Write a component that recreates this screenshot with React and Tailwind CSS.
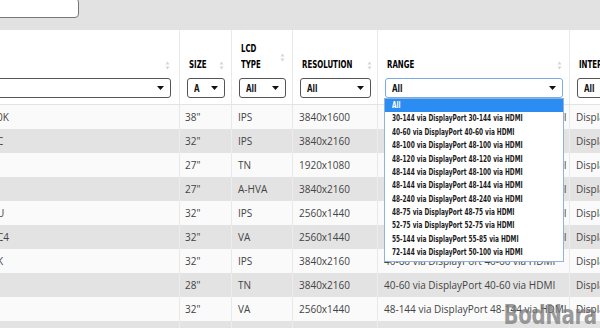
import React from 'react';

const cond = { fontFamily: '"Liberation Sans Narrow", "DejaVu Sans Condensed", "DejaVu Sans", sans-serif' };
const body = { fontFamily: '"Open Sans", "Noto Sans", sans-serif' };

const cols = 'grid grid-cols-[180px_52px_61px_85px_192px_140px]';

const rows = [
    { name: '0K', size: '38"', lcd: 'IPS', res: '3840x1600', range: '30-144 via DisplayPort 30-144 via HDMI' },
    { name: 'C', size: '32"', lcd: 'IPS', res: '3840x2160', range: '40-60 via DisplayPort 40-60 via HDMI' },
    { name: '', size: '27"', lcd: 'TN', res: '1920x1080', range: '48-144 via DisplayPort 48-144 via HDMI' },
    { name: '', size: '27"', lcd: 'A-HVA', res: '3840x2160', range: '48-100 via DisplayPort 48-100 via HDMI' },
    { name: 'U', size: '32"', lcd: 'IPS', res: '2560x1440', range: '48-144 via DisplayPort 48-144 via HDMI' },
    { name: 'C4', size: '32"', lcd: 'VA', res: '2560x1440', range: '48-144 via DisplayPort 48-144 via HDMI' },
    { name: 'K', size: '32"', lcd: 'IPS', res: '3840x2160', range: '40-60 via DisplayPort 40-60 via HDMI' },
    { name: '', size: '28"', lcd: 'TN', res: '3840x2160', range: '40-60 via DisplayPort 40-60 via HDMI' },
    { name: '', size: '32"', lcd: 'VA', res: '2560x1440', range: '48-144 via DisplayPort 48-144 via HDMI' },
    { name: '', size: '27"', lcd: 'IPS', res: '2560x1440', range: '48-144 via DisplayPort 48-144 via HDMI' },
];

const options = [
    'All',
    '30-144 via DisplayPort 30-144 via HDMI',
    '40-60 via DisplayPort 40-60 via HDMI',
    '48-100 via DisplayPort 48-100 via HDMI',
    '48-120 via DisplayPort 48-120 via HDMI',
    '48-144 via DisplayPort 48-100 via HDMI',
    '48-144 via DisplayPort 48-144 via HDMI',
    '48-240 via DisplayPort 48-240 via HDMI',
    '48-75 via DisplayPort 48-75 via HDMI',
    '52-75 via DisplayPort 52-75 via HDMI',
    '55-144 via DisplayPort 55-85 via HDMI',
    '72-144 via DisplayPort 50-100 via HDMI',
];

function SortIcon() {
    return (
        <svg width="5" height="9" viewBox="0 0 5 9" className="shrink-0">
            <path d="M2.5 0.5 L4.5 3.5 L0.5 3.5 Z" fill="#d4d4d4" />
            <path d="M2.5 8.5 L4.5 5.5 L0.5 5.5 Z" fill="#d4d4d4" />
        </svg>
    );
}

function Caret() {
    return (
        <svg width="7" height="4" viewBox="0 0 7 4" className="shrink-0">
            <path d="M0 0 L7 0 L3.5 4 Z" fill="#111" />
        </svg>
    );
}

function Select({ label = 'All', focus = false, className = '' }) {
    return (
        <div
            className={`h-[20px] shrink-0 flex items-center justify-between pl-[6px] pr-[6px] bg-white rounded-[3px] border ${focus ? 'border-[#7aaae6]' : 'border-[#555]'} ${className}`}
        >
            <span className="text-[10px] font-bold text-[#111] origin-left scale-x-[0.8]" style={cond}>{label}</span>
            <Caret />
        </div>
    );
}

function HeadCell({ children, sort = true, select, last = false }) {
    return (
        <div className={`flex flex-col justify-end pb-[6px] pl-[7px] pr-[6px] ${last ? '' : 'border-r border-[#e9e9e9]'}`}>
            <div className="flex items-center justify-between mb-[5px]">
                <div className="ml-[2px] text-[10px] font-bold leading-[16px] text-black uppercase origin-left scale-x-[0.78] whitespace-nowrap" style={cond}>
                    {children}
                </div>
                {sort && <div className="mr-[1px]"><SortIcon /></div>}
            </div>
            {select}
        </div>
    );
}

export default function App() {
    return (
        <div className="w-[600px] h-[328px] overflow-hidden bg-[#fafafa] relative" style={body}>
            {/* top bar */}
            <div className="h-[30px] bg-[#e2e2e2] flex items-start">
                <div className="w-[84px] h-[20px] -ml-[5px] -mt-[2px] bg-white border border-[#777] rounded-[4px]" />
            </div>

            {/* header */}
            <div className={`${cols} h-[75px] bg-white border-b border-[#e3e3e3]`}>
                <div className="flex flex-col justify-end pb-[6px] pr-[8px] overflow-hidden border-r border-[#e9e9e9]">
                    <div className="flex justify-end items-center h-[16px] mb-[5px] mr-[1px]"><SortIcon /></div>
                    <Select className="-ml-[30px]" />
                </div>
                <HeadCell select={<Select label="A" />}>Size</HeadCell>
                <HeadCell select={<Select />}>LCD<br />Type</HeadCell>
                <HeadCell select={<Select />}>Resolution</HeadCell>
                <HeadCell select={<Select focus />}>Range</HeadCell>
                <HeadCell sort={false} last select={<Select className="-mr-[40px]" />}>Interface</HeadCell>
            </div>

            {/* body */}
            <div className="text-[10px] text-[#444]">
                {rows.map((r, i) => {
                    const gray = i % 2 === 1;
                    const line = gray ? 'border-r border-[#ededed]' : 'border-r border-[#e8e8e8]';
                    return (
                        <div key={i} className={`${cols} h-[24px] ${gray ? 'bg-[#e3e3e3]' : 'bg-[#fafafa]'}`}>
                            <div className={`flex items-center overflow-hidden whitespace-nowrap ${line}`}>
                                <span className="-ml-[3px]">{r.name}</span>
                            </div>
                            <div className={`flex items-center pl-[5px] ${line}`}>{r.size}</div>
                            <div className={`flex items-center pl-[6px] ${line}`}>{r.lcd}</div>
                            <div className={`flex items-center pl-[6px] ${line}`}>{r.res}</div>
                            <div className={`flex items-center pl-[6px] whitespace-nowrap overflow-hidden ${line}`}>{r.range}</div>
                            <div className="flex items-center pl-[6px] whitespace-nowrap">DisplayPort, HDMI</div>
                        </div>
                    );
                })}
            </div>

            {/* open range dropdown */}
            <div className="absolute left-[384px] top-[98px] w-[180px] bg-white border border-[#8fb2e3] pb-[1px] overflow-hidden">
                {options.map((o, i) => (
                    <div
                        key={o}
                        className={`h-[13.4px] flex items-center pl-[7px] whitespace-nowrap ${i === 0 ? 'bg-[#2b8cf2] text-white' : 'text-[#1a1a1a]'}`}
                    >
                        <span className="text-[9px] font-bold origin-left scale-x-[0.72]" style={cond}>{o}</span>
                    </div>
                ))}
            </div>

            {/* watermark */}
            <div
                className="absolute right-[3px] bottom-[0px] leading-[26px] text-[26px] font-black tracking-[-0.5px] text-[#7a7a7a] opacity-75 origin-right scale-x-[0.85]"
                style={{ fontFamily: '"DejaVu Sans Condensed", "DejaVu Sans", sans-serif' }}
            >
                BodNara
            </div>
        </div>
    );
}
